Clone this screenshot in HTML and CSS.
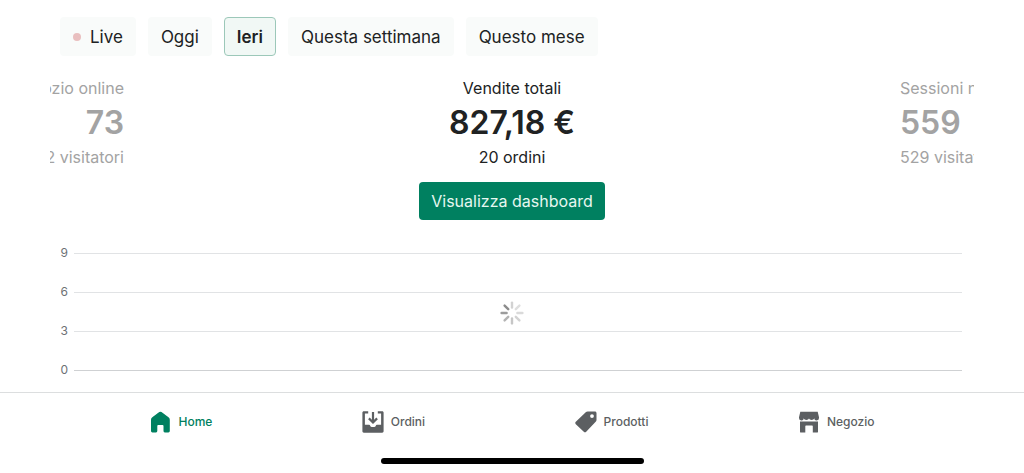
FILE: index.html
```html
<!DOCTYPE html>
<html lang="it">
  <head>
    <meta charset="UTF-8" />
    <meta name="viewport" content="width=device-width, initial-scale=1.0" />
    <title>Home</title>
    <link rel="stylesheet" href="styles.css">
  </head>
  <body>
    <main>
      <div class="tabs">
        <button class="tab" type="button"><span class="dot"></span>Live</button>
        <button class="tab" type="button">Oggi</button>
        <button class="tab active" type="button">Ieri</button>
        <button class="tab" type="button">Questa settimana</button>
        <button class="tab" type="button">Questo mese</button>
      </div>

      <div class="metrics">
        <div class="metric side prev">
          <div class="name">Negozio online</div>
          <div class="value">73</div>
          <div class="detail">72 visitatori</div>
        </div>
        <div class="metric">
          <div class="name">Vendite totali</div>
          <div class="value">827,18 €</div>
          <div class="detail">20 ordini</div>
        </div>
        <div class="metric side next">
          <div class="name">Sessioni negozio</div>
          <div class="value">559</div>
          <div class="detail">529 visitatori</div>
        </div>
      </div>

      <button class="btn" type="button">Visualizza dashboard</button>

      <div class="chart">
        <div class="row"><span class="tick">9</span><span class="line"></span></div>
        <div class="row"><span class="tick">6</span><span class="line"></span></div>
        <div class="row"><span class="tick">3</span><span class="line"></span></div>
        <div class="row"><span class="tick">0</span><span class="line base"></span></div>
        <div class="loading">
          <svg width="24" height="24" viewBox="0 0 24 24" fill="none" stroke-width="2.4" stroke-linecap="round">
            <path stroke="#d2d2d2" d="M12 1.6v5" />
            <path stroke="#dedede" d="M19.4 4.6l-3.6 3.6" />
            <path stroke="#dadada" d="M22.4 12h-5" />
            <path stroke="#d2d2d2" d="M19.4 19.4l-3.6-3.6" />
            <path stroke="#c6c6c6" d="M12 22.4v-5" />
            <path stroke="#b4b4b4" d="M4.6 19.4l3.6-3.6" />
            <path stroke="#9c9c9c" d="M1.6 12h5" />
            <path stroke="#8c8c8c" d="M4.6 4.6l3.6 3.6" />
          </svg>
        </div>
      </div>
    </main>

    <footer>
      <nav>
        <a class="item current" href="#">
          <svg class="icon" viewBox="0 0 22 22">
            <path d="M10.300 1.100a2 2 0 0 1 2.200 0l7 5.200a3 3 0 0 1 1.300 2.400V20a1.400 1.400 0 0 1-1.400 1.400h-3.600a1.300 1.300 0 0 1-1.300-1.300V15a.9.9 0 0 0-.9-.9H9.200a.9.9 0 0 0-.9.9v5.100A1.300 1.300 0 0 1 7 21.400H3.400A1.400 1.400 0 0 1 2 20V8.700a3 3 0 0 1 1.300-2.400z" />
          </svg>
          Home
        </a>
        <a class="item" href="#">
          <svg class="icon" viewBox="0 0 22 22">
            <path d="M1.800.3h4.400v2.200H2.900v11.200h4.200c.6 0 .8.400 1 .9.300 1 1 1.500 2.900 1.500s2.600-.5 2.900-1.500c.2-.5.400-.9 1-.9h4.200V2.500h-3.300V.3h4.400c.8 0 1.400.6 1.400 1.400v18.600c0 .8-.6 1.400-1.400 1.400H1.800c-.8 0-1.400-.6-1.400-1.400V1.700C.4.9 1 .3 1.800.3z" />
            <path class="stroke" d="M11 1v10M6.900 7.400l4.100 4.100 4.100-4.100" />
          </svg>
          Ordini
        </a>
        <a class="item" href="#">
          <svg class="icon" viewBox="0 0 22 22">
            <path fill-rule="evenodd" d="M12.600.4h7.200c1 0 1.700.7 1.700 1.700v7c0 .6-.2 1.100-.6 1.500l-9.700 10.200c-.7.7-1.700.7-2.400 0L.8 13.200c-.7-.7-.7-1.700 0-2.400L11 1c.4-.4 1-.6 1.600-.6zM17 3.200a1.900 1.900 0 1 0 0 3.800 1.900 1.900 0 0 0 0-3.800z" />
          </svg>
          Prodotti
        </a>
        <a class="item" href="#">
          <svg class="icon" viewBox="0 0 22 22">
            <path d="M2.300.8h17.400l1.300 5.400v.9a2.400 2.400 0 0 1-4.800.2c-.3 2.100-4.800 2.100-5.200 0-.4 2.100-4.900 2.100-5.200 0A2.400 2.400 0 0 1 1 7.100v-.9z" />
            <path d="M2 10.500h18v10.200c0 .5-.4.900-.9.900h-4.300v-6.300c0-.4-.3-.7-.7-.7H8c-.4 0-.7.300-.7.700v6.300H2.900a.9.9 0 0 1-.9-.9z" />
          </svg>
          Negozio
        </a>
      </nav>
      <div class="home-bar"></div>
    </footer>
  </body>
</html>
```
FILE: styles.css
```css
* {
  box-sizing: border-box;
}

body {
  margin: 0;
  min-height: 100vh;
  display: flex;
  flex-direction: column;
  background: #fff;
  color: #202223;
  font-family: Inter, "Liberation Sans", sans-serif;
  font-size: 16px;
  line-height: 24px;
}

button {
  font: inherit;
  color: inherit;
  border: none;
  cursor: pointer;
}

main {
  flex: 1;
  display: flex;
  flex-direction: column;
  padding: 17px 50px 0;
}

.tabs {
  display: flex;
  gap: 12px;
  padding: 0 10px;
}

.tab {
  display: flex;
  align-items: center;
  height: 39px;
  padding: 0 13px;
  border-radius: 4px;
  background: #f9fbfa;
  font-size: 17px;
  white-space: nowrap;
}

.tab.active {
  padding: 0 12px;
  border: 1px solid #9cc8b9;
  background: #f1f8f5;
  font-weight: 600;
}

.dot {
  width: 8px;
  height: 8px;
  margin-right: 9px;
  border-radius: 50%;
  background: #e9bfbf;
}

.metrics {
  display: flex;
  justify-content: space-between;
  margin-top: 20px;
}

.metric {
  display: flex;
  flex-direction: column;
  align-items: center;
  white-space: nowrap;
}

.side {
  width: 74px;
  overflow: hidden;
  color: #a3a3a3;
}

.prev {
  align-items: flex-end;
}

.next {
  align-items: flex-start;
}

.value {
  font-size: 32px;
  line-height: 45px;
  font-weight: 600;
}

.btn {
  align-self: center;
  height: 38px;
  margin-top: 13px;
  padding: 0 12px;
  border-radius: 4px;
  background: #008060;
  color: #e6f7f0;
}

.chart {
  position: relative;
  margin-top: 14px;
  padding: 0 12px 2px 10px;
}

.row {
  display: flex;
  align-items: center;
  gap: 6px;
  height: 39px;
}

.tick {
  width: 8px;
  padding-bottom: 2px;
  color: #6d7175;
  font-size: 12px;
  line-height: 17px;
  text-align: right;
}

.line {
  flex: 1;
  height: 1px;
  background: #e1e3e5;
}

.base {
  background: #cfd1d3;
}

.loading {
  position: absolute;
  inset: 0;
  display: flex;
  align-items: center;
  justify-content: center;
}

footer {
  padding-bottom: 9px;
  border-top: 1px solid #dcdedf;
}

nav {
  display: flex;
  justify-content: space-evenly;
  padding-top: 17px;
}

.item {
  display: flex;
  align-items: center;
  gap: 7px;
  color: #5c5f62;
  font-size: 12px;
  font-weight: 500;
  text-decoration: none;
}

.icon {
  width: 22px;
  height: 22px;
  fill: currentColor;
}

.stroke {
  fill: none;
  stroke: currentColor;
  stroke-width: 2.2;
}

.current {
  color: #008060;
}

.home-bar {
  width: 263px;
  height: 6px;
  margin: 24px auto 0;
  border-radius: 3px;
  background: #000;
}
```
